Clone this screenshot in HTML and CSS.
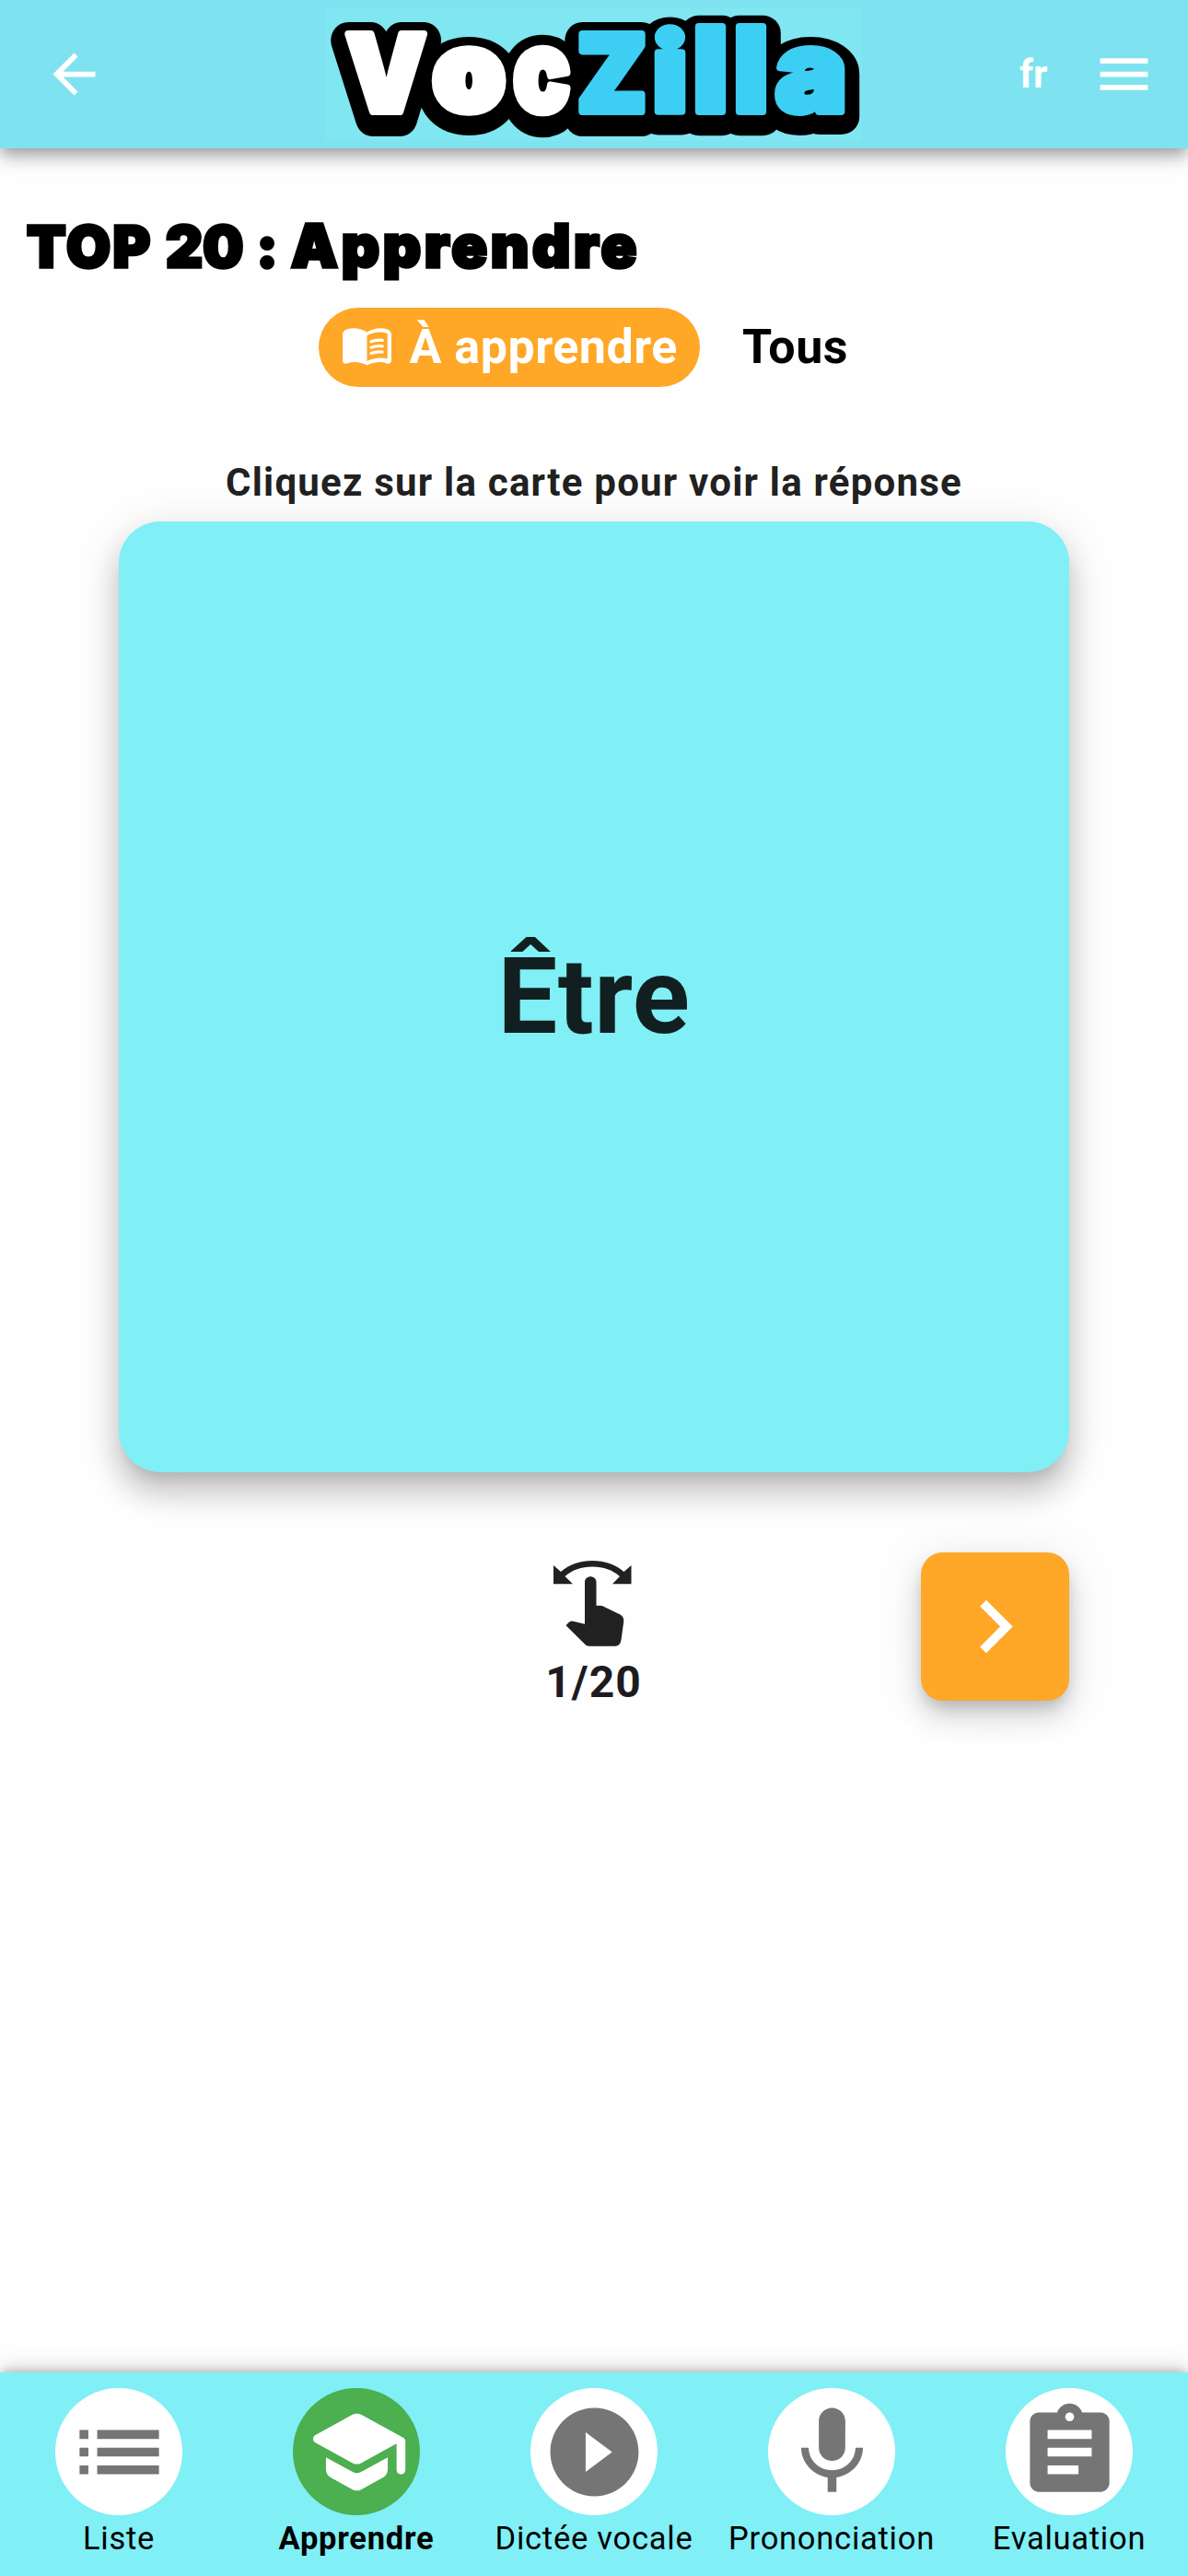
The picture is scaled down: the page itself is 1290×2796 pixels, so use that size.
FILE: index.html
```html
<!DOCTYPE html>
<html lang="fr">
<head>
<meta charset="utf-8">
<title>VocZilla</title>
<link rel="stylesheet" href="styles.css">
</head>
<body>
<div class="app">
  <header class="topbar">
    <a class="back" aria-label="Retour"><svg class="icon" viewBox="0 0 24 24"><path d="M20 11H7.83l5.59-5.59L12 4l-8 8 8 8 1.41-1.41L7.83 13H20v-2z"/></svg></a>
    <svg class="logo" viewBox="353.5 9 582.5 144" role="img" aria-label="VocZilla">
      <defs>
        <g id="wordmark">
          <g class="voc">
            <text class="letter" transform="translate(375.3 121) scale(1.092 1.151)">V</text>
            <text class="letter round" transform="translate(470.8 118.8) scale(1.214 1.16)">o</text>
            <text class="letter" transform="translate(557 120.8) scale(1.018 1.232)">c</text>
          </g>
          <g class="zilla">
            <text class="letter" transform="translate(626.3 121) scale(1.087 1.151)">Z</text>
            <text class="letter" transform="translate(707.9 121) scale(1.286 1.165)">i</text>
            <text class="letter" transform="translate(751.9 121) scale(1.286 1.26)">l</text>
            <text class="letter" transform="translate(795.9 121) scale(1.286 1.26)">l</text>
            <text class="letter" transform="translate(841.4 120.8) scale(1.302 1.232)">a</text>
          </g>
        </g>
      </defs>
      <use class="outline" href="#wordmark" y="6.5"/>
      <rect class="backing" x="480" y="60" width="400" height="60"/>
      <use class="face" href="#wordmark"/>
    </svg>
    <div class="actions">
      <span class="lang">fr</span>
      <svg class="icon" viewBox="0 0 24 24"><path d="M3 18h18v-2H3v2zm0-5h18v-2H3v2zm0-7v2h18V6H3z"/></svg>
    </div>
  </header>

  <main class="content">
    <h1 class="title"><span class="caps">TOP</span> 20 : <span class="word">Apprendre</span></h1>

    <div class="tabs">
      <div class="tab active">
        <svg class="book" viewBox="0 0 53 40.5"><path fill-rule="evenodd" d="M26.5 4.5C20 0 9-1.5 2.5 2.4Q0 4 0 7V35C0 38.5 3 39.5 5.5 38.2C12 36 20 37 26.5 40.5C33 37 41 36 47.5 38.2C50 39.5 53 38.5 53 35V7Q53 4 50.5 2.4C44-1.5 33 0 26.5 4.5ZM26.5 8.2C33 4.4 42 3.5 48.7 6V33.3C42 31.5 33 32.3 26.5 36Z"/><path class="lines" d="M31 14.8Q37 12.4 43.2 13.4M31 21.2Q37 18.8 43.2 19.8M31 27.6Q37 25.2 43.2 26.2"/></svg>
        <span>À apprendre</span>
      </div>
      <div class="tab">Tous</div>
    </div>

    <p class="hint">Cliquez sur la carte pour voir la réponse</p>
    <section class="card">Être</section>

    <div class="controls">
      <div class="progress">
        <svg class="swipe" viewBox="-2 0 89 93"><path d="M0 5L8 12C17 4 29 0 42.2 0S67.500 4 76.500 12L84.500 5V25.300H64L72 17C64 10 54.500 6.500 42.200 6.500S20.500 10 12.500 17L21 25.300H0Z"/><path d="M34 23.500C34 15.200 46.500 15.200 46.500 23.500V48.700H50.500Q53 48.700 55 50L72.500 58.600Q76.800 61 76.200 66.500L73.500 86Q72.500 92.700 67 92.700H39Q36 92.700 34 90.500L13.500 70.300L16.300 67.300Q18.500 64.800 21.500 65.700L34 68.700Z"/></svg>
        <span class="count">1/20</span>
      </div>
      <button class="next" aria-label="Suivant"><svg viewBox="0 0 24 24"><path d="M10 6L8.590 7.410 13.170 12l-4.580 4.590L10 18l6-6z"/></svg></button>
    </div>
  </main>

  <nav class="tabbar">
    <a class="item"><span class="disc"><svg viewBox="0 0 24 24"><path d="M3 13h2v-2H3v2zm0 4h2v-2H3v2zm0-8h2V7H3v2zm4 4h14v-2H7v2zm0 4h14v-2H7v2zM7 7v2h14V7H7z"/></svg></span>Liste</a>
    <a class="item current"><span class="disc"><svg viewBox="0 0 24 24"><path d="M5 13.180v2.810c0 .73.4 1.410 1.040 1.760l5 2.730c.6.33 1.320.33 1.920 0l5-2.730c.64-.35 1.040-1.030 1.040-1.760v-2.810l-6.040 3.300c-.6.33-1.320.33-1.920 0L5 13.180zm6.040-9.660l-8.430 4.600c-.69.38-.69 1.380 0 1.760l8.430 4.600c.6.33 1.320.33 1.920 0L21 10.090V16c0 .55.45 1 1 1s1-.45 1-1V9.590c0-.37-.2-.7-.52-.88l-9.520-5.190c-.6-.32-1.320-.32-1.920 0z"/></svg></span>Apprendre</a>
    <a class="item"><span class="disc"><svg viewBox="0 0 24 24"><path d="M12 2C6.480 2 2 6.480 2 12s4.480 10 10 10 10-4.480 10-10S17.520 2 12 2zm-2 14.500v-9l6 4.500-6 4.500z"/></svg></span>Dictée vocale</a>
    <a class="item"><span class="disc"><svg viewBox="0 0 24 24"><path d="M12 14c1.660 0 2.990-1.340 2.990-3L15 5c0-1.660-1.340-3-3-3S9 3.340 9 5v6c0 1.660 1.340 3 3 3zm5.300-3c0 3-2.540 5.100-5.300 5.100S6.700 14 6.700 11H5c0 3.410 2.720 6.230 6 6.720V21h2v-3.280c3.280-.48 6-3.300 6-6.720h-1.700z"/></svg></span>Prononciation</a>
    <a class="item"><span class="disc"><svg viewBox="0 0 24 24"><path d="M19 3h-4.180C14.400 1.840 13.300 1 12 1c-1.300 0-2.400.84-2.820 2H5c-1.100 0-2 .9-2 2v14c0 1.100.9 2 2 2h14c1.100 0 2-.9 2-2V5c0-1.100-.9-2-2-2zm-7 0c.55 0 1 .45 1 1s-.45 1-1 1-1-.45-1-1 .45-1 1-1zm2 14H7v-2h7v2zm3-4H7v-2h10v2zm0-4H7V7h10v2z"/></svg></span>Evaluation</a>
  </nav>
</div>
</body>
</html>
```
FILE: styles.css
```css
* { box-sizing: border-box; }

body {
  margin: 0;
  background: #fefefe;
  font-family: Roboto, "Liberation Sans", sans-serif;
}

svg { display: block; fill: currentColor; }

.app {
  height: 2796px;
  display: flex;
  flex-direction: column;
  overflow: hidden;
}

/* Top bar */
.topbar {
  height: 161px;
  display: grid;
  grid-template-columns: 1fr auto 1fr;
  align-items: center;
  padding: 0 35.5px 0 45.5px;
  background: #7ee2f0;
  color: #fff;
  box-shadow: 0 6px 12px -3px rgba(0, 0, 0, .2), 0 12px 15px rgba(0, 0, 0, .16), 0 3px 30px rgba(0, 0, 0, .12);
}
.icon { width: 69px; height: 69px; }
.logo {
  width: 582.5px;
  height: 144px;
  margin-right: 10px;
  background: #80e6f1;
}
.letter {
  font: 900 100px Inter, "Liberation Sans", sans-serif;
  vector-effect: non-scaling-stroke;
}
.outline { --voc: #000; --zilla: #000; --extra: 4px; stroke-width: 39px; stroke-linejoin: round; }
.face { --voc: #fff; --zilla: #3dcef3; stroke-width: 8px; stroke-linejoin: round; }
.face { --round: 12px; }
.outline { --round: 43px; }
.round { stroke-width: var(--round); }
.voc { fill: var(--voc); stroke: var(--voc); }
.zilla { fill: var(--zilla); stroke: var(--zilla); }
.backing { fill: #000; }
.actions {
  display: flex;
  align-items: center;
  justify-content: flex-end;
  gap: 48px;
}
.lang { font-size: 42px; font-weight: 700; }

/* Page */
.content {
  flex: 1;
  display: flex;
  flex-direction: column;
}
.title {
  height: 80px;
  margin: 66px 0 0 29px;
  font: 900 62px/80px Inter, "Liberation Sans", sans-serif;
  font-feature-settings: "calt" 0;
  color: #000;
  word-spacing: 2px;
  -webkit-text-stroke: 3.5px #000;
  stroke-linejoin: round;
}
.caps { letter-spacing: 2.5px; }
.word { font-size: 64px; letter-spacing: 3.7px; }

.tabs {
  display: flex;
  gap: 46.5px;
  height: 86px;
  margin: 26.5px 0 0 346px;
}
.tab {
  display: flex;
  align-items: center;
  font-size: 52px;
  font-weight: 700;
  letter-spacing: .5px;
  color: #000;
}
.tab.active {
  width: 413.5px;
  padding-left: 25.5px;
  gap: 20px;
  border-radius: 43px;
  background: #ffa726;
  color: #fff;
}
.book { width: 53px; height: 40.5px; }
.lines { fill: none; stroke: #fff; stroke-width: 3.2px; stroke-linecap: round; }

.hint {
  margin: 79.5px 0 17.4px;
  font-size: 42px;
  line-height: 50px;
  font-weight: 700;
  letter-spacing: 1.23px;
  text-align: center;
  color: #212121;
}
.card {
  width: 1032px;
  height: 1032px;
  margin: 0 auto;
  display: flex;
  align-items: center;
  justify-content: center;
  padding-bottom: 1px;
  border-radius: 45px;
  background: #80eff6;
  color: rgba(0, 0, 0, .87);
  font-size: 115px;
  font-weight: 700;
  letter-spacing: .5px;
  box-shadow: 0 15px 15px -9px rgba(0, 0, 0, .12), 0 24px 30px 3px rgba(0, 0, 0, .14), 0 9px 42px 6px rgba(0, 0, 0, .1);
}

.controls {
  display: grid;
  grid-template-columns: 161px 1fr 161px;
  width: 1032px;
  margin: 87px auto 0;
}
.progress {
  grid-column: 2;
  display: flex;
  flex-direction: column;
  align-items: center;
  padding-top: 9px;
  color: #212121;
}
.swipe { width: 89px; height: 93px; margin-right: 3px; }
.count {
  margin: 11px 1px 0 0;
  font-size: 48px;
  line-height: 56px;
  font-weight: 700;
  letter-spacing: 1px;
  color: #1d1b20;
}
.next {
  width: 161px;
  height: 161px;
  padding: 0;
  display: grid;
  place-items: center;
  border: 0;
  border-radius: 24px;
  background: #ffa726;
  color: #fff;
  box-shadow: 0 9px 15px -3px rgba(0, 0, 0, .14), 0 18px 30px rgba(0, 0, 0, .14), 0 3px 54px rgba(0, 0, 0, .08);
}
.next svg { width: 115px; height: 115px; }

/* Bottom navigation */
.tabbar {
  height: 221px;
  display: grid;
  grid-template-columns: repeat(5, 1fr);
  padding-top: 17px;
  background: #80eff6;
  box-shadow: 0 -3px 9px -2px rgba(0, 0, 0, .22), 0 -6px 20px rgba(0, 0, 0, .15);
}
.item {
  display: flex;
  flex-direction: column;
  align-items: center;
  gap: 5px;
  font-size: 34.5px;
  line-height: 40px;
  letter-spacing: .75px;
  white-space: nowrap;
  color: #000;
}
.current { font-weight: 700; }
.disc {
  width: 138px;
  height: 138px;
  display: grid;
  place-items: center;
  border-radius: 50%;
  background: #fff;
  color: #757575;
}
.disc svg { width: 115px; height: 115px; }
.current .disc { background: #4caf50; color: #fff; }
```
